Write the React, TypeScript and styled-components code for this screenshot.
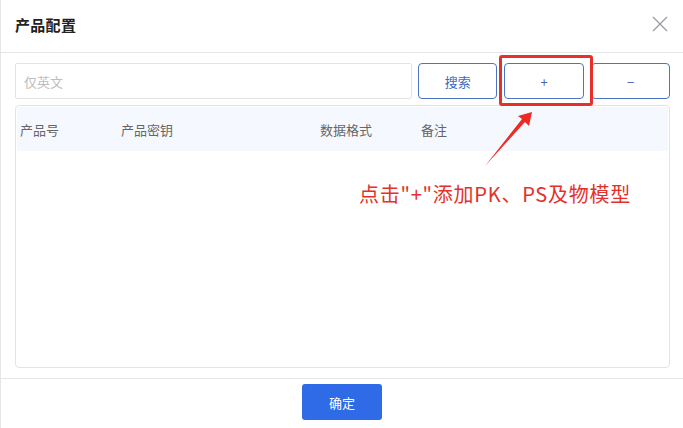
import React from "react";
import styled, { createGlobalStyle } from "styled-components";

const Global = createGlobalStyle`
  html, body { margin: 0; padding: 0; background: #fff; }
  body { font-family: "Noto Sans CJK SC", "Noto Sans", sans-serif; }
  * { box-sizing: border-box; }
`;

const Dialog = styled.div`
  position: relative;
  width: 683px;
  height: 428px;
  background: #fff;
  border-left: 1px solid #e6e6e6;
  display: flex;
  flex-direction: column;
`;

const Header = styled.div`
  height: 53px;
  flex: none;
  display: flex;
  align-items: center;
  justify-content: space-between;
  padding: 0 14px 4px 14px;
  border-bottom: 1px solid #e6e6e6;
`;

const Title = styled.div`
  font-size: 15px;
  font-weight: 700;
  color: #222;
  letter-spacing: 0.3px;
`;

const Close = styled.button`
  border: none;
  background: none;
  padding: 0;
  width: 18px;
  height: 18px;
  display: flex;
  cursor: pointer;
`;

const Body = styled.div`
  flex: 1;
  padding: 10px 13px 10px 14px;
  display: flex;
  flex-direction: column;
`;

const Toolbar = styled.div`
  display: flex;
  height: 36px;
  gap: 6px;
`;

const Input = styled.input`
  width: 398px;
  height: 36px;
  border: 1px solid #e3e3e3;
  border-radius: 2px;
  padding: 0 8px;
  font-family: inherit;
  font-size: 13px;
  outline: none;
  &::placeholder { color: #bdbdbd; }
`;

const OutlineButton = styled.button<{ $w: number; $ml?: number }>`
  width: ${(p) => p.$w}px;
  margin-left: ${(p) => p.$ml ?? 0}px;
  height: 36px;
  border: 1px solid #4d74c2;
  border-radius: 4px;
  background: #fff;
  color: #4369c0;
  font-family: inherit;
  font-size: 13px;
  display: flex;
  align-items: center;
  justify-content: center;
  padding: 0;
`;

const Highlight = styled.div`
  position: absolute;
  left: 498px;
  top: 55px;
  width: 94px;
  height: 51px;
  border: 3px solid #e8302a;
  border-radius: 3px;
  pointer-events: none;
`;

const Table = styled.div`
  margin-top: 6px;
  height: 263px;
  border: 1px solid #e4e4e4;
  border-radius: 4px;
  padding: 1px;
`;

const HeadRow = styled.div`
  height: 44px;
  background: #f5f8fe;
  display: grid;
  grid-template-columns: 101px 199px 101px 1fr;
  align-items: center;
  padding-left: 3px;
  border-radius: 3px 3px 0 0;
`;

const HeadCell = styled.div`
  font-size: 13px;
  color: #666;
`;

const Footer = styled.div`
  height: 50px;
  flex: none;
  border-top: 1px solid #e6e6e6;
  display: flex;
  justify-content: center;
  padding-top: 5px;
`;

const Primary = styled.button`
  width: 80px;
  height: 36px;
  border: none;
  border-radius: 3px;
  background: #2f6be6;
  color: #fff;
  font-family: inherit;
  font-size: 13px;
`;

const Note = styled.div`
  position: absolute;
  left: 358px;
  top: 179px;
  font-size: 20px;
  color: #e5302a;
  white-space: nowrap;
  letter-spacing: 0.75px;
`;

const Arrow = styled.svg`
  position: absolute;
  left: 470px;
  top: 100px;
  pointer-events: none;
`;

export default function App() {
  return (
    <>
      <Global />
      <Dialog>
        <Header>
          <Title>产品配置</Title>
          <Close aria-label="close">
            <svg width="18" height="18" viewBox="0 0 18 18">
              <path d="M2 2L16 16M16 2L2 16" stroke="#9a9aa6" strokeWidth="1.3" />
            </svg>
          </Close>
        </Header>
        <Body>
          <Toolbar>
            <Input placeholder="仅英文" />
            <OutlineButton $w={79}>搜索</OutlineButton>
            <OutlineButton $w={80} $ml={1}>+</OutlineButton>
            <OutlineButton $w={79} $ml={1}>−</OutlineButton>
          </Toolbar>
          <Table>
            <HeadRow>
              <HeadCell>产品号</HeadCell>
              <HeadCell>产品密钥</HeadCell>
              <HeadCell>数据格式</HeadCell>
              <HeadCell>备注</HeadCell>
            </HeadRow>
          </Table>
        </Body>
        <Footer>
          <Primary>确定</Primary>
        </Footer>
        <Highlight />
        <Arrow width="80" height="80" viewBox="0 0 80 80">
          <polygon points="14,66 51,19 47,16 61,12 58,26 54,22" fill="#f02a22" />
        </Arrow>
        <Note>点击"+"添加PK、PS及物模型</Note>
      </Dialog>
    </>
  );
}
